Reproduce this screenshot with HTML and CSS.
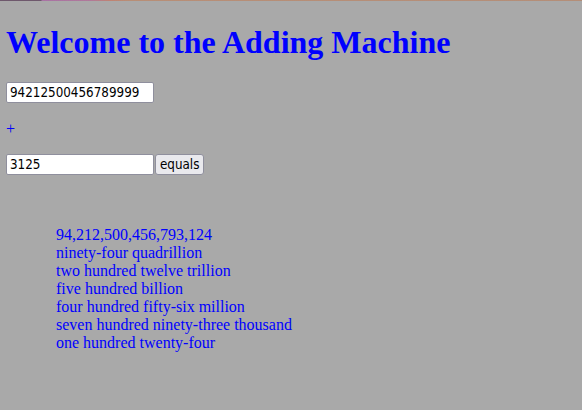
FILE: index.html
```html
<!DOCTYPE html>
<html>
<head>
<meta charset="utf-8">
<link rel="stylesheet" href="styles.css">
</head>
<body>
<div class="topbar"></div>
<main class="page">
  <h1 class="title">Welcome to the Adding Machine</h1>
  <div class="row"><input class="field" type="text" value="94212500456789999"></div>
  <p class="op">+</p>
  <div class="row"><input class="field" type="text" value="3125"><button class="btn">equals</button></div>
  <div class="result">
    <div>94,212,500,456,793,124</div>
    <div>ninety-four quadrillion</div>
    <div>two hundred twelve trillion</div>
    <div>five hundred billion</div>
    <div>four hundred fifty-six million</div>
    <div>seven hundred ninety-three thousand</div>
    <div>one hundred twenty-four</div>
  </div>
</main>
</body>
</html>
```
FILE: styles.css
```css
html, body {
  margin: 0;
  padding: 0;
  background: #a9a9a9;
  height: 100%;
}
body {
  font-family: "Liberation Serif", "Times New Roman", serif;
  font-size: 16px;
  color: #0000ff;
}
.topbar {
  height: 1px;
  background: linear-gradient(to right, #6e586c 0, #6e586c 41px, #a872a4 42px, #b0789a 90px, #c08272 110px, #b88e76 130px, #b48e78 100%);
}
.page {
  padding: 0 6px;
  display: flow-root;
}
.title {
  font-size: 32px;
  font-weight: bold;
  margin: 23px 0 21px;
  color: #0000ff;
}
.row {
  display: flex;
  align-items: center;
  gap: 1px;
  height: 21px;
}
.field {
  box-sizing: border-box;
  width: 148px;
  height: 21px;
  margin: 0;
  padding: 1px 3px;
  border: 1px solid #8f8f9d;
  border-radius: 2px;
  background: #fff;
  color: #000;
  font-family: "DejaVu Sans Condensed", "DejaVu Sans", sans-serif;
  font-size: 13.3px;
}
.btn {
  box-sizing: border-box;
  height: 21px;
  margin: 0;
  padding: 0 4px;
  border: 1px solid #8f8f9d;
  border-radius: 3px;
  background: #e9e9ed;
  color: #000;
  font-family: "DejaVu Sans Condensed", "DejaVu Sans", sans-serif;
  font-size: 13.3px;
}
.op {
  margin: 17px 0 16px;
  line-height: 18px;
}
.result {
  margin: 51px 0 0 50px;
  line-height: 18px;
}
```
